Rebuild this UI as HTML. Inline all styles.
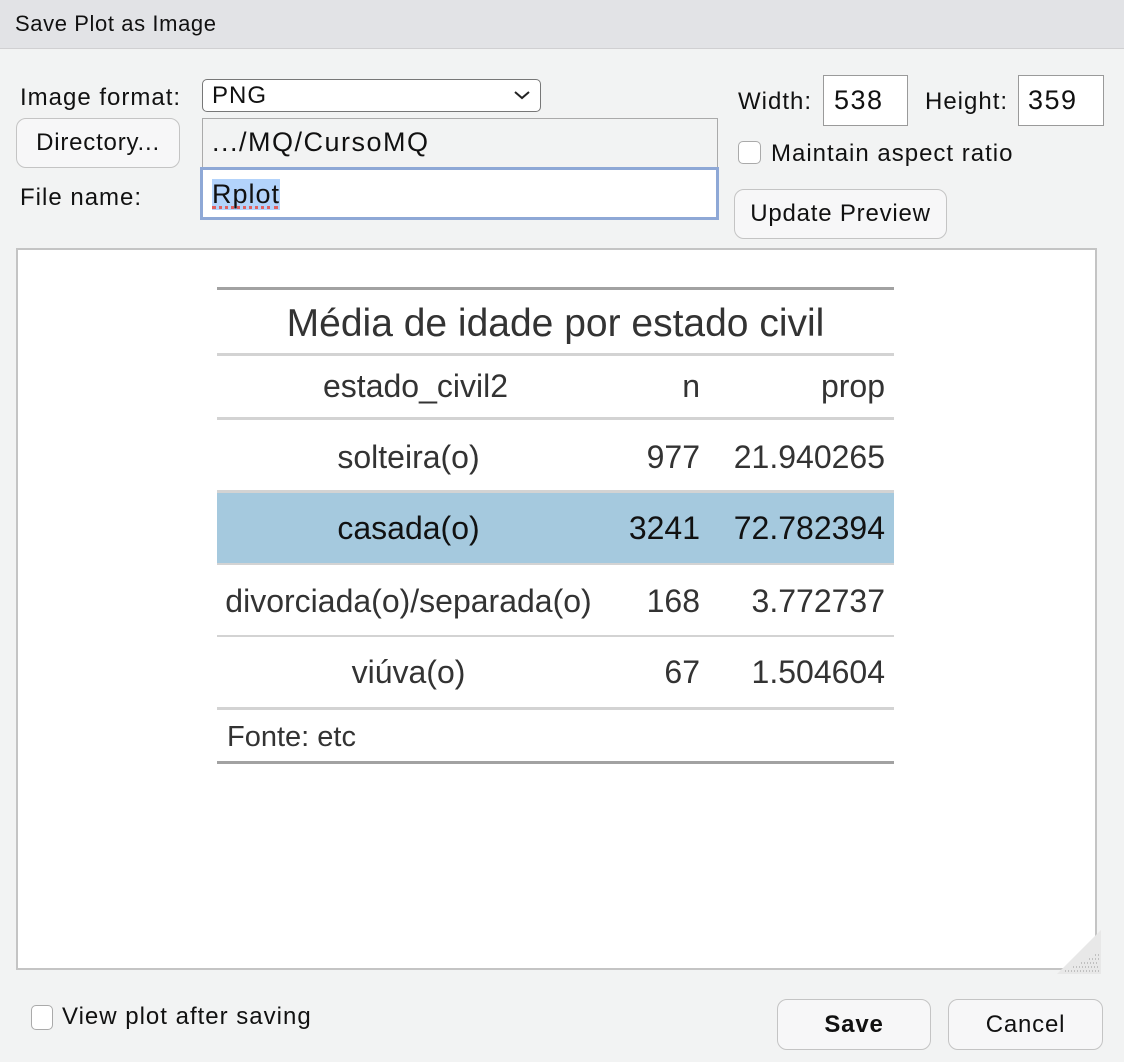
<!DOCTYPE html>
<html><head><meta charset="utf-8"><style>
*{margin:0;padding:0;box-sizing:border-box}
body{width:1124px;height:1062px;background:#f2f3f3;font-family:"Liberation Sans",sans-serif;color:#111;position:relative;overflow:hidden}
.a{position:absolute;white-space:nowrap}
.t{font-size:24px;letter-spacing:1px}
.btn{position:absolute;background:#f7f7f8;border:1.5px solid #c4c4c4;border-radius:10px;font-size:24px;letter-spacing:0.8px;text-align:center}
.box{position:absolute;background:#fff;border:1.5px solid #9a9a9a}
.cb{position:absolute;width:23px;height:23px;background:#fff;border:1.5px solid #aaa;border-radius:5px}
.tc{position:absolute;font-size:32px;color:#333;white-space:nowrap}
.ln{position:absolute;left:217px;width:677px}
</style></head><body>
<div class="a" style="left:0;top:0;width:1124px;height:49px;background:#e2e3e6;border-bottom:1px solid #d0d0d2"></div>
<div class="a" style="left:15px;top:11px;font-size:22px;letter-spacing:0.6px">Save Plot as Image</div>

<div class="a t" style="left:20px;top:84px">Image format:</div>
<div class="box" style="left:202px;top:79px;width:339px;height:33px;border-radius:5px;border-color:#777"></div>
<div class="a t" style="left:212px;top:82px">PNG</div>
<svg class="a" style="left:513px;top:88px" width="18" height="14"><path d="M2 4 L9 10 L16 4" stroke="#222" stroke-width="2" fill="none"/></svg>

<div class="btn" style="left:16px;top:118px;width:164px;height:50px;line-height:47px">Directory...</div>
<div class="a" style="left:202px;top:118px;width:516px;height:52px;border:1.5px solid #aaa;border-bottom:none;background:#f2f3f3"></div>
<div class="a" style="left:212px;top:127px;font-size:27px;letter-spacing:1.5px">.../MQ/CursoMQ</div>

<div class="a t" style="left:20px;top:184px">File name:</div>
<div class="a" style="left:200px;top:167px;width:519px;height:53px;border:3px solid #8ea8d6;background:#fff"></div>
<div class="a" style="left:212px;top:179px;background:#b3d3fb;font-size:27px;letter-spacing:1px;height:31px;line-height:31px">Rplot</div>
<div class="a" style="left:212px;top:206px;width:66px;border-bottom:3px dotted #e06060"></div>

<div class="a t" style="left:738px;top:88px">Width:</div>
<div class="box" style="left:823px;top:75px;width:85px;height:51px"></div>
<div class="a" style="left:834px;top:85px;font-size:27px;letter-spacing:1.5px">538</div>
<div class="a t" style="left:925px;top:88px">Height:</div>
<div class="box" style="left:1018px;top:75px;width:86px;height:51px"></div>
<div class="a" style="left:1028px;top:85px;font-size:27px;letter-spacing:1.5px">359</div>
<div class="cb" style="left:738px;top:141px"></div>
<div class="a t" style="left:771px;top:140px">Maintain aspect ratio</div>
<div class="btn" style="left:734px;top:189px;width:213px;height:50px;line-height:48px">Update Preview</div>

<div class="a" style="left:16px;top:248px;width:1081px;height:722px;background:#fff;border:2px solid #c4c4c4"></div>
<svg class="a" style="left:1055px;top:928px" width="48" height="48"><polygon points="46,2 46,46 2,46" fill="#e8e8e8"/><path d="M10 43 H44 M18 39 H44 M26 35 H44 M34 31 H44 M40 27 H44" stroke="#999" stroke-width="1" stroke-dasharray="1 2"/></svg>

<div class="ln" style="top:287px;height:3px;background:#a2a2a2"></div>
<div class="tc" style="left:217px;width:677px;text-align:center;top:302px;font-size:39px">Média de idade por estado civil</div>
<div class="ln" style="top:353px;height:3px;background:#d3d3d3"></div>
<div class="tc" style="left:217px;width:291px;text-align:right;top:368px">estado_civil2</div>
<div class="tc" style="left:600px;width:100px;text-align:right;top:368px">n</div>
<div class="tc" style="left:700px;width:185px;text-align:right;top:368px">prop</div>
<div class="ln" style="top:417px;height:3px;background:#d3d3d3"></div>
<div class="tc" style="left:217px;width:383px;text-align:center;top:439px">solteira(o)</div>
<div class="tc" style="left:600px;width:100px;text-align:right;top:439px">977</div>
<div class="tc" style="left:700px;width:185px;text-align:right;top:439px">21.940265</div>
<div class="ln" style="top:490px;height:3px;background:#d3d3d3"></div>
<div class="ln" style="top:493px;height:70px;background:#a5c9de"></div>
<div class="tc" style="left:217px;width:383px;text-align:center;top:510px;color:#111">casada(o)</div>
<div class="tc" style="left:600px;width:100px;text-align:right;top:510px;color:#111">3241</div>
<div class="tc" style="left:700px;width:185px;text-align:right;top:510px;color:#111">72.782394</div>
<div class="ln" style="top:563px;height:2px;background:#d3d3d3"></div>
<div class="tc" style="left:217px;width:383px;text-align:center;top:583px">divorciada(o)/separada(o)</div>
<div class="tc" style="left:600px;width:100px;text-align:right;top:583px">168</div>
<div class="tc" style="left:700px;width:185px;text-align:right;top:583px">3.772737</div>
<div class="ln" style="top:635px;height:2px;background:#d3d3d3"></div>
<div class="tc" style="left:217px;width:383px;text-align:center;top:654px">viúva(o)</div>
<div class="tc" style="left:600px;width:100px;text-align:right;top:654px">67</div>
<div class="tc" style="left:700px;width:185px;text-align:right;top:654px">1.504604</div>
<div class="ln" style="top:707px;height:3px;background:#d3d3d3"></div>
<div class="tc" style="left:227px;top:721px;font-size:29px">Fonte: etc</div>
<div class="ln" style="top:761px;height:3px;background:#a2a2a2"></div>

<div class="cb" style="left:31px;top:1005px;width:22px;height:25px"></div>
<div class="a t" style="left:62px;top:1003px">View plot after saving</div>
<div class="btn" style="left:777px;top:999px;width:154px;height:51px;line-height:49px;font-weight:bold">Save</div>
<div class="btn" style="left:948px;top:999px;width:155px;height:51px;line-height:49px">Cancel</div>
</body></html>
